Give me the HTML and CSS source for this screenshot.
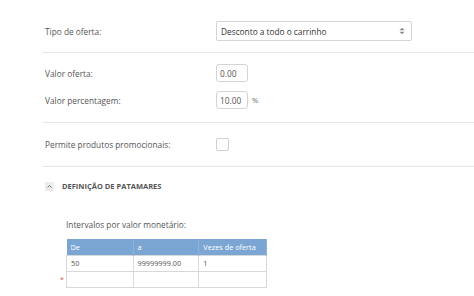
FILE: index.html
```html
<!DOCTYPE html>
<html lang="pt">
<head>
    <meta charset="UTF-8">
    <title>Oferta</title>
    <link rel="stylesheet" href="styles.css">
</head>
<body>
    <div class="form">
        <div class="section first">
            <div class="row">
                <label class="label">Tipo de oferta:</label>
                <div class="select">
                    <span>Desconto a todo o carrinho</span>
                    <svg class="arrows" width="6" height="8" viewBox="0 0 6 8">
                        <path d="M0.5 3.2 L3 0.8 L5.5 3.2 Z M0.5 4.8 L3 7.2 L5.5 4.8 Z" fill="#888"/>
                    </svg>
                </div>
            </div>
        </div>

        <div class="section">
            <div class="row">
                <label class="label">Valor oferta:</label>
                <div class="input">0.00</div>
            </div>
            <div class="row second">
                <label class="label">Valor percentagem:</label>
                <div class="input">10.00</div>
                <span class="unit">%</span>
            </div>
        </div>

        <div class="section third">
            <div class="row">
                <label class="label">Permite produtos promocionais:</label>
                <div class="checkbox"></div>
            </div>
        </div>

        <div class="group">
            <div class="group-head">
                <span class="toggle">
                    <svg width="9" height="9" viewBox="0 0 9 9">
                        <path d="M2.5 5.5 L4.5 3.5 L6.5 5.5" fill="none" stroke="#777" stroke-width="1"/>
                    </svg>
                </span>
                <span class="group-title">DEFINIÇÃO DE PATAMARES</span>
            </div>

            <div class="intervals">
                <p class="intervals-title">Intervalos por valor monetário:</p>
                <div class="table-wrap">
                    <span class="required">*</span>
                    <table class="grid">
                        <thead>
                            <tr>
                                <th class="c1">De</th>
                                <th class="c2">a</th>
                                <th class="c3">Vezes de oferta</th>
                            </tr>
                        </thead>
                        <tbody>
                            <tr>
                                <td>50</td>
                                <td>99999999.00</td>
                                <td>1</td>
                            </tr>
                            <tr>
                                <td></td>
                                <td></td>
                                <td></td>
                            </tr>
                        </tbody>
                    </table>
                </div>
            </div>
        </div>
    </div>
</body>
</html>
```

FILE: styles.css
```css
* {
    margin: 0;
    padding: 0;
    box-sizing: border-box;
}

body {
    font-family: "Open Sans", "Noto Sans", sans-serif;
    font-size: 8.3px;
    color: #555;
    background: #fff;
}

.form {
    padding-left: 43px;
}

.section {
    border-bottom: 1px solid #e6e6e6;
    padding: 11px 0 13px 2px;
}

.section.first {
    padding-top: 21px;
    padding-bottom: 11px;
}

.section.third {
    padding-top: 12px;
    padding-bottom: 13px;
}

.row {
    display: flex;
    align-items: center;
    min-height: 18px;
}

.row.second {
    margin-top: 9px;
}

.label {
    width: 171px;
    color: #555;
}

.select {
    width: 196px;
    height: 20px;
    border: 1px solid #d4d4d4;
    border-radius: 2px;
    display: flex;
    align-items: center;
    justify-content: space-between;
    padding: 0 6px 0 4px;
    color: #333;
}

.input {
    width: 32px;
    height: 18px;
    border: 1px solid #d4d4d4;
    border-radius: 3px;
    display: flex;
    align-items: center;
    padding-left: 3px;
    color: #555;
}

.unit {
    margin-left: 4px;
    font-size: 7.5px;
    color: #666;
}

.checkbox {
    width: 13px;
    height: 13px;
    border: 1px solid #d0d0d0;
    border-radius: 2px;
}

.group {
    padding: 14px 0 0 2px;
}

.group-head {
    display: flex;
    align-items: center;
    height: 10px;
}

.toggle {
    width: 9px;
    height: 9px;
    background: #ececec;
    display: flex;
    margin-right: 8px;
}

.group-title {
    font-weight: bold;
    font-size: 7.5px;
    color: #555;
}

.intervals {
    padding: 28px 0 0 21px;
}

.intervals-title {
    color: #555;
    line-height: 12px;
    margin-bottom: 8px;
}

.table-wrap {
    position: relative;
}

.required {
    position: absolute;
    left: -6px;
    top: 36px;
    color: #d9534f;
    font-size: 7px;
}

.grid {
    border-collapse: collapse;
    width: 201px;
    font-size: 7.3px;
}

.grid th {
    background: #7ba6d3;
    color: #fff;
    font-weight: normal;
    text-align: left;
    height: 16px;
    padding: 0 4px;
    border-right: 1px solid #8fb4db;
}

.grid td {
    height: 16px;
    padding: 0 4px;
    border: 1px solid #d8d8d8;
    color: #555;
}

.grid .c1 {
    width: 67px;
}

.grid .c2 {
    width: 66px;
}

.grid .c3 {
    width: 68px;
}
```
